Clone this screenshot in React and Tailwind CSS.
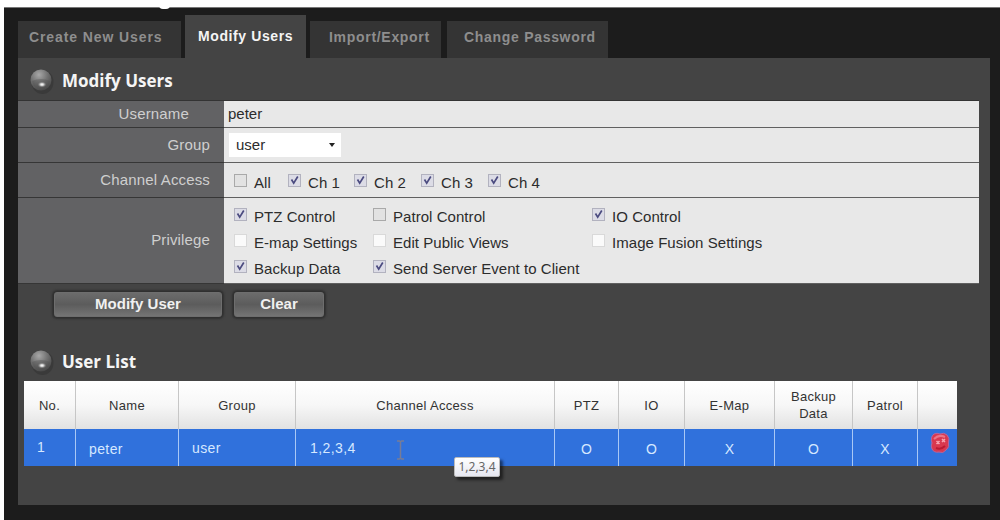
import React from 'react';

const tabs = [
  { label: 'Create New Users', cls: 'w-[163px] h-[37px] pl-[11px] mr-1 tracking-[0.9px]' },
  { label: 'Modify Users', active: true, cls: 'w-[121px] h-[43px] pl-[13px] pb-[1px] mr-1 tracking-[0.6px]' },
  { label: 'Import/Export', cls: 'w-[131px] h-[37px] pl-[19px] mr-1.5 tracking-[0.7px]' },
  { label: 'Change Password', cls: 'w-[161px] h-[37px] pl-[17px] tracking-[0.7px]' },
];

const channels = [
  { label: 'All', checked: false, cls: 'w-[54px]' },
  { label: 'Ch 1', checked: true, cls: 'w-[66px]' },
  { label: 'Ch 2', checked: true, cls: 'w-[67px]' },
  { label: 'Ch 3', checked: true, cls: 'w-[67px]' },
  { label: 'Ch 4', checked: true, cls: 'w-[66px]' },
];

const privileges = [
  { label: 'PTZ Control', checked: true },
  { label: 'Patrol Control', checked: false },
  { label: 'IO Control', checked: true },
  { label: 'E-map Settings', disabled: true },
  { label: 'Edit Public Views', disabled: true },
  { label: 'Image Fusion Settings', disabled: true },
  { label: 'Backup Data', checked: true },
  { label: 'Send Server Event to Client', checked: true },
];

function Bullet() {
  return (
    <svg width="26" height="28" viewBox="0 0 26 28">
      <defs>
        <radialGradient id="ball" cx="0.4" cy="0.25" r="0.8">
          <stop offset="0" stopColor="#a8a8a8" />
          <stop offset="0.5" stopColor="#737373" />
          <stop offset="1" stopColor="#444" />
        </radialGradient>
        <radialGradient id="glow">
          <stop offset="0" stopColor="#fff" />
          <stop offset="0.4" stopColor="#ccc" />
          <stop offset="1" stopColor="#777" stopOpacity="0" />
        </radialGradient>
      </defs>
      <ellipse cx="13.5" cy="15" rx="11" ry="12" fill="#303030" opacity="0.5" />
      <circle cx="12" cy="13" r="10.5" fill="url(#ball)" />
      <path d="M3 14 Q12 10 21 14 Q19 22 12 22 Q5 22 3 14Z" fill="#4c4c4c" opacity="0.35" />
      <ellipse cx="13" cy="17.5" rx="4.5" ry="3" fill="url(#glow)" />
    </svg>
  );
}

function Check({ label, checked, disabled, className = '' }) {
  return (
    <label className={`flex items-start whitespace-nowrap ${className}`}>
      <span
        className={`block w-[13px] h-[13px] shrink-0 border ${
          disabled ? 'bg-[#fafafa] border-[#d9d9d9]' : checked ? 'bg-[#dcdce6] border-[#b2b2bf]' : 'bg-[#e2e2e2] border-[#a9a9a9]'
        }`}
      >
        {checked && (
          <svg width="11" height="11" viewBox="0 0 11 11" fill="none" stroke="#4b4b80" strokeWidth="1.7">
            <path d="M2.5 4.5 L4.7 8.2 L8.8 1.5" />
          </svg>
        )}
      </span>
      <span className="ml-[7px] leading-[18px] tracking-[0.05px]">{label}</span>
    </label>
  );
}

function Row({ label, className, labelClass = '', children }) {
  return (
    <div className={`flex ${className}`}>
      <div
        className={`w-[206px] shrink-0 flex items-center justify-end border-b border-[#363636] bg-[#626264] text-[#cfcfcf] text-[15px] tracking-[0.15px] ${labelClass}`}
      >
        {label}
      </div>
      <div className="flex-1 border-b border-[#606060] bg-[#e8e8e8] text-[#2c2c2c] text-[15px]">{children}</div>
    </div>
  );
}

function Button({ className, children }) {
  return (
    <button
      className={`h-[25px] rounded-[3px] border border-[#6e6e6e] bg-linear-to-b from-[#6c6c6c] via-[#5c5c5c] to-[#747474] text-[#f0f0f0] text-[15px] font-bold leading-none pb-[2px] shadow-[0_0_2px_2px_#303030] ${className}`}
    >
      {children}
    </button>
  );
}

function Th({ className = '', children }) {
  return <th className={`border-r border-[#c6c6c6] font-normal p-0 last:border-r-0 ${className}`}>{children}</th>;
}

function Td({ className = 'text-center pt-[3px]', children }) {
  return <td className={`border-r border-[#a9c8f5] p-0 last:border-r-0 ${className}`}>{children}</td>;
}

function DeleteIcon() {
  return (
    <svg width="20" height="22" viewBox="0 0 20 22" className="ml-[12px] mb-[9px]">
      <path
        d="M4 2 Q7 0.5 10 2 Q14 0 17 3 Q20 6 18.5 11 Q20 15 16 18 Q13 22 9 20 Q4 21 2 17 Q0.5 14 2 11 Q0 5 4 2Z"
        fill="#d9384f"
        stroke="#b566a0"
        strokeWidth="1"
      />
      <path d="M4 7 Q9 2 15 5" stroke="#ec7588" strokeWidth="2" fill="none" />
      <path d="M6.5 9 L9.5 12 M9.5 9 L6.5 12 M12 7 L15 10 M15 7 L12 10" stroke="#f7a3b0" strokeWidth="1.5" />
      <path d="M6 16 Q11 18 15 14" stroke="#ba1a33" strokeWidth="2" fill="none" />
    </svg>
  );
}

export default function App() {
  return (
    <div className="w-[1000px] h-[520px] overflow-hidden bg-white pt-[7px] pl-1 font-['Liberation_Sans',Arial,sans-serif]">
      <div className="relative h-[513px] bg-[#1c1c1c] border-t border-[#777] pt-[7px] pl-[14px]">
        {/* tail of the page title above the frame */}
        <span className="absolute left-[155px] -top-[3px] w-[11px] h-[4px] rounded-b-full bg-white" />

        <div className="flex items-end h-[43px]">
          {tabs.map((tab) => (
            <div
              key={tab.label}
              className={`flex items-center text-[14px] font-bold whitespace-nowrap ${
                tab.active ? 'bg-[#444] text-[#f5f5f5]' : 'bg-[#343434] text-[#8e8e8e] pb-[5px]'
              } ${tab.cls}`}
            >
              {tab.label}
            </div>
          ))}
        </div>

        <div className="w-[972px] h-[447px] bg-[#444]">
          <div className="flex items-center h-[42px] pl-[11px] pt-1">
            <Bullet />
            <h2 className="ml-[7px] font-['Open_Sans',sans-serif] font-bold text-[17px] text-[#f5f5f5]">Modify Users</h2>
          </div>

          <div className="w-[961px] border-t border-[#333]">
            <Row label="Username" className="h-[27px]" labelClass="pr-[35px]">
              <div className="pl-1 pt-[3px] leading-[20px]">peter</div>
            </Row>
            <Row label="Group" className="h-[35px]" labelClass="pr-[14px]">
              <div className="flex items-center justify-between w-[112px] h-[24px] mt-[5px] ml-[5px] pl-[7px] pr-[6px] bg-white">
                user
                <span className="border-x-[3.5px] border-x-transparent border-t-4 border-t-[#222]" />
              </div>
            </Row>
            <Row label="Channel Access" className="h-[35px]" labelClass="pr-[14px]">
              <div className="flex pl-[10px] pt-[11px]">
                {channels.map((c) => (
                  <Check key={c.label} {...c} className={c.cls} />
                ))}
              </div>
            </Row>
            <Row label="Privilege" className="h-[86px]" labelClass="pr-[14px]">
              <div className="grid grid-cols-[139px_219px_1fr] auto-rows-[26px] pl-[10px] pt-[10px]">
                {privileges.map((p) => (
                  <Check key={p.label} {...p} />
                ))}
              </div>
            </Row>
          </div>

          <div className="flex gap-[12px] pl-[36px] mt-[8px]">
            <Button className="w-[168px]">Modify User</Button>
            <Button className="w-[90px]">Clear</Button>
          </div>

          <div className="flex items-center h-[42px] mt-[24px] pl-[11px]">
            <Bullet />
            <h2 className="ml-[7px] font-['Open_Sans',sans-serif] font-bold text-[17px] text-[#f5f5f5]">User List</h2>
          </div>

          <table className="w-[933px] ml-1.5 -mt-[2px] table-fixed border-separate border-spacing-0">
            <colgroup>
              <col className="w-[52px]" />
              <col className="w-[103px]" />
              <col className="w-[117px]" />
              <col className="w-[259px]" />
              <col className="w-[64px]" />
              <col className="w-[66px]" />
              <col className="w-[90px]" />
              <col className="w-[78px]" />
              <col className="w-[65px]" />
              <col className="w-[39px]" />
            </colgroup>
            <thead>
              <tr className="h-[48px] bg-linear-to-b from-white via-[#f7f7f7] to-[#e2e2e2] text-[13px] tracking-[0.3px] text-[#333] leading-[17px]">
                <Th>No.</Th>
                <Th>Name</Th>
                <Th>Group</Th>
                <Th>Channel Access</Th>
                <Th>PTZ</Th>
                <Th>IO</Th>
                <Th>E-Map</Th>
                <Th>
                  Backup
                  <br />
                  Data
                </Th>
                <Th>Patrol</Th>
                <Th />
              </tr>
            </thead>
            <tbody>
              <tr className="h-[37px] bg-[#3071dc] text-[14px] text-[#d6e8ff]">
                <Td className="pl-[13px]">1</Td>
                <Td className="pl-[13px] pt-[3px] tracking-[0.4px]">peter</Td>
                <Td className="pl-[13px] pt-[2px] tracking-[0.4px]">user</Td>
                <Td className="pl-[14px] pt-[2px] relative tracking-[0.4px]">
                  1,2,3,4
                  {/* text cursor */}
                  <svg className="absolute left-[100px] top-[11px]" width="9" height="20" viewBox="0 0 9 20" fill="none" stroke="#777c96" strokeWidth="1.5">
                    <path d="M1 1 H3.5 L4.5 2 L5.5 1 H8 M4.5 2 V18 M1 19 H3.5 L4.5 18 L5.5 19 H8" />
                  </svg>
                  <span className="absolute left-[158px] top-[28px] w-[46px] h-[20px] rounded-[2px] border border-[#bbb] bg-linear-to-b from-white to-[#e6e7f0] text-center text-[12px] tracking-normal leading-[18px] text-[#666] font-['Noto_Sans',sans-serif] shadow-[3px_3px_3px_#0008]">
                    1,2,3,4
                  </span>
                </Td>
                <Td>O</Td>
                <Td>O</Td>
                <Td>X</Td>
                <Td>O</Td>
                <Td>X</Td>
                <Td className="">
                  <DeleteIcon />
                </Td>
              </tr>
            </tbody>
          </table>
        </div>
      </div>
    </div>
  );
}
